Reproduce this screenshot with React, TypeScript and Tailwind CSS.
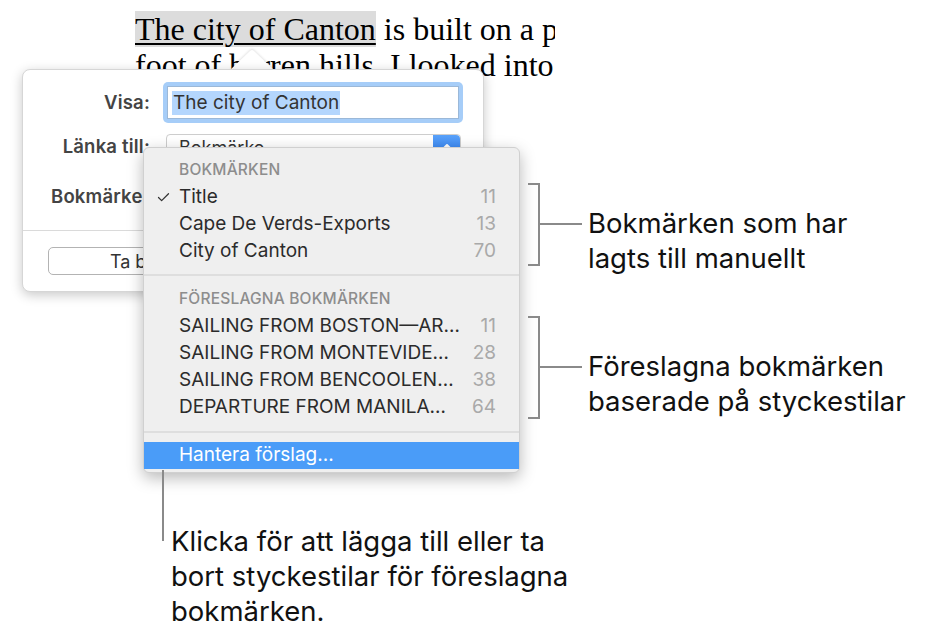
import { Check, ChevronUp } from "lucide-react";

type Item = { label: string; count: number; checked?: boolean };

const manual: Item[] = [
  { label: "Title", count: 11, checked: true },
  { label: "Cape De Verds-Exports", count: 13 },
  { label: "City of Canton", count: 70 },
];

const suggested: Item[] = [
  { label: "SAILING FROM BOSTON—AR…", count: 11 },
  { label: "SAILING FROM MONTEVIDE…", count: 28 },
  { label: "SAILING FROM BENCOOLEN…", count: 38 },
  { label: "DEPARTURE FROM MANILA…", count: 64 },
];

function MenuHeader({ children }: { children: string }) {
  return (
    <div className="h-[28px] flex items-center pl-[35px] text-[15.5px] font-medium tracking-[0.2px] text-[#8d8d8d]">
      {children}
    </div>
  );
}

function MenuRow({ item }: { item: Item }) {
  return (
    <div className="h-[27px] flex items-center pr-[23px] text-[19px] text-[#2b2b2b]">
      <div className="w-[35px] flex justify-center pl-[3px]">
        {item.checked && <Check size={15} strokeWidth={2} className="text-[#333]" />}
      </div>
      <span className="flex-1 whitespace-nowrap">{item.label}</span>
      <span className="text-[#a9a9a9]">{item.count}</span>
    </div>
  );
}

function Separator({ className = "py-[9px]" }: { className?: string }) {
  return (
    <div className={className}>
      <div className="h-[2px] bg-[#dedede]" />
    </div>
  );
}

function Bracket({ top, height, mid }: { top: number; height: number; mid: number }) {
  return (
    <div className="absolute left-[528px] w-[54px]" style={{ top, height }}>
      <div className="absolute left-0 top-0 w-[12px] h-[2px] bg-[#8a8a8a]" />
      <div className="absolute left-0 bottom-0 w-[12px] h-[2px] bg-[#8a8a8a]" />
      <div className="absolute left-[10px] top-0 bottom-0 w-[2px] bg-[#8a8a8a]" />
      <div className="absolute left-[10px] right-0 h-[2px] bg-[#8a8a8a]" style={{ top: mid }} />
    </div>
  );
}

export default function App() {
  return (
    <div className="relative w-[939px] h-[633px] bg-white overflow-hidden font-['Inter',sans-serif]">
      {/* document text */}
      <div className="absolute left-[135px] top-[11px] w-[420px] overflow-hidden font-['Liberation_Serif',serif] text-[32px] leading-[36px] text-black whitespace-nowrap">
        <div>
          <span className="bg-[#dcdcdc] underline decoration-[1.5px] underline-offset-[3px]">
            The city of Canton
          </span>{" "}
          is built on a plain at the
        </div>
        <div>foot of barren hills. I looked into the</div>
      </div>

      {/* popover arrow */}
      <svg
        className="absolute left-[228px] top-[48px] drop-shadow-[0_-1px_1px_rgba(0,0,0,0.12)]"
        width="48"
        height="24"
        viewBox="0 0 48 24"
      >
        <path d="M2 22 L22 3 Q24 1 26 3 L46 22 Z" fill="white" />
      </svg>

      {/* link popover */}
      <div className="absolute left-[22px] top-[69px] w-[462px] h-[223px] rounded-[8px] bg-white border border-[#d6d6d6] shadow-[0_3px_12px_rgba(0,0,0,0.22)]">
        <div className="flex flex-col pt-[12px]">
          <div className="flex items-center h-[41px]">
            <div className="w-[127px] text-right text-[18.5px] font-semibold tracking-[0.2px] text-[#444]">Visa:</div>
            <div className="ml-[13px] w-[300px] h-[41px] rounded-[5px] bg-[#a6cdf8] p-[4px]">
              <div className="h-full bg-white border border-[#9bb8d8] flex items-center px-[4px]">
                <span className="bg-[#b4d6fd] text-[19px] leading-[24px] text-[#333] px-[1px]">
                  The city of Canton
                </span>
              </div>
            </div>
          </div>
          <div className="flex items-center h-[30px] mt-[9px]">
            <div className="w-[127px] text-right text-[18.5px] font-semibold tracking-[0.2px] text-[#444]">Länka till:</div>
            <div className="ml-[16px] w-[295px] h-[26px] rounded-[4px] border border-[#cdcdcd] flex items-center justify-between">
              <span className="pl-[12px] text-[18px] text-[#333]">Bokmärke</span>
              <div className="w-[27px] h-[25px] rounded-r-[4px] bg-gradient-to-b from-[#5aa2fa] to-[#1f73ec] flex items-center justify-center">
                <ChevronUp size={16} strokeWidth={3} className="text-white" />
              </div>
            </div>
          </div>
          <div className="flex items-center h-[30px] mt-[20px]">
            <div className="pl-[28px] text-[18.5px] font-semibold tracking-[0.2px] text-[#444] whitespace-nowrap">Bokmärke:</div>
          </div>
          <div className="h-px bg-[#dadada] mt-[18px]" />
          <div className="pl-[25px] pt-[16px]">
            <div className="w-[184px] h-[28px] rounded-[5px] border border-[#b3b3b3] bg-white flex items-center justify-center text-[18px] text-[#333]">
              Ta bort
            </div>
          </div>
        </div>
      </div>

      {/* bookmark menu */}
      <div className="absolute left-[143px] top-[147px] w-[377px] rounded-[6px] bg-[#efefef] border border-[#d0d0d0] shadow-[0_5px_16px_rgba(0,0,0,0.28)] pt-[8px] pb-[3px]">
        <MenuHeader>BOKMÄRKEN</MenuHeader>
        {manual.map((i) => (
          <MenuRow key={i.label} item={i} />
        ))}
        <Separator />
        <MenuHeader>FÖRESLAGNA BOKMÄRKEN</MenuHeader>
        {suggested.map((i) => (
          <MenuRow key={i.label} item={i} />
        ))}
        <Separator className="pt-[10px] pb-[9px]" />
        <div className="h-[27px] flex items-center pl-[35px] bg-[#4a9cf8] text-[19px] text-white">
          Hantera förslag...
        </div>
      </div>

      {/* callouts */}
      <Bracket top={183} height={83} mid={40} />
      <div className="absolute left-[588px] top-[206px] text-[27.5px] leading-[35px] text-[#111]">
        <div>Bokmärken som har</div>
        <div>lagts till manuellt</div>
      </div>

      <Bracket top={316} height={103} mid={50} />
      <div className="absolute left-[588px] top-[349px] text-[27.5px] leading-[35px] text-[#111]">
        <div>Föreslagna bokmärken</div>
        <div>baserade på styckestilar</div>
      </div>

      <div className="absolute left-[162px] top-[470px] w-[2px] h-[71px] bg-[#8a8a8a]" />
      <div className="absolute left-[171px] top-[524px] text-[27.5px] leading-[35px] text-[#111]">
        <div>Klicka för att lägga till eller ta</div>
        <div>bort styckestilar för föreslagna</div>
        <div>bokmärken.</div>
      </div>
    </div>
  );
}
